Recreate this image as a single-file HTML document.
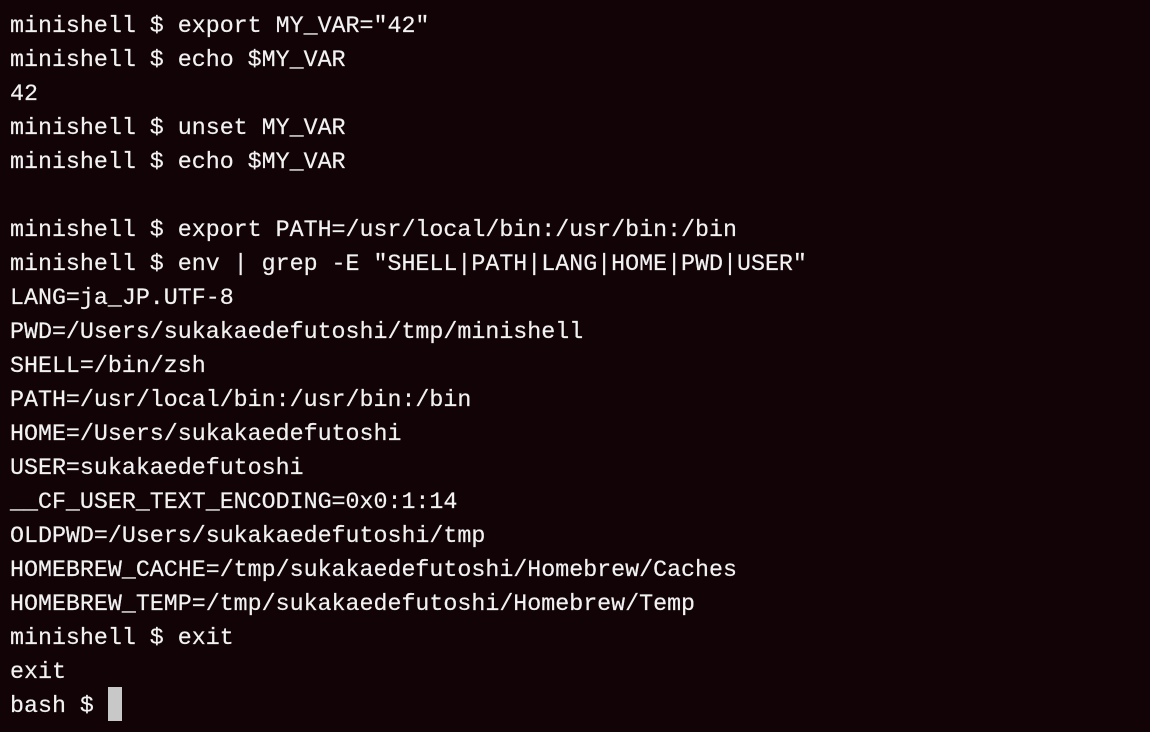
<!DOCTYPE html>
<html><head><meta charset="utf-8"><style>
html,body{margin:0;padding:0;background:#110306;width:1150px;height:732px;overflow:hidden}
pre{position:absolute;left:10px;top:-25px;margin:0;font-family:"Liberation Mono","DejaVu Sans Mono",monospace;font-size:23.3px;line-height:34px;color:#f2f2f2;-webkit-text-stroke:0.2px #f2f2f2}
.cur{display:inline-block;width:14px;height:34px;background:#c8c8c8;vertical-align:top;position:relative;top:-2px}
</style></head><body>
<pre>minishell $
minishell $ export MY_VAR="42"
minishell $ echo $MY_VAR
42
minishell $ unset MY_VAR
minishell $ echo $MY_VAR

minishell $ export PATH=/usr/local/bin:/usr/bin:/bin
minishell $ env | grep -E "SHELL|PATH|LANG|HOME|PWD|USER"
LANG=ja_JP.UTF-8
PWD=/Users/sukakaedefutoshi/tmp/minishell
SHELL=/bin/zsh
PATH=/usr/local/bin:/usr/bin:/bin
HOME=/Users/sukakaedefutoshi
USER=sukakaedefutoshi
__CF_USER_TEXT_ENCODING=0x0:1:14
OLDPWD=/Users/sukakaedefutoshi/tmp
HOMEBREW_CACHE=/tmp/sukakaedefutoshi/Homebrew/Caches
HOMEBREW_TEMP=/tmp/sukakaedefutoshi/Homebrew/Temp
minishell $ exit
exit
bash $ <span class="cur"></span></pre>
</body></html>
